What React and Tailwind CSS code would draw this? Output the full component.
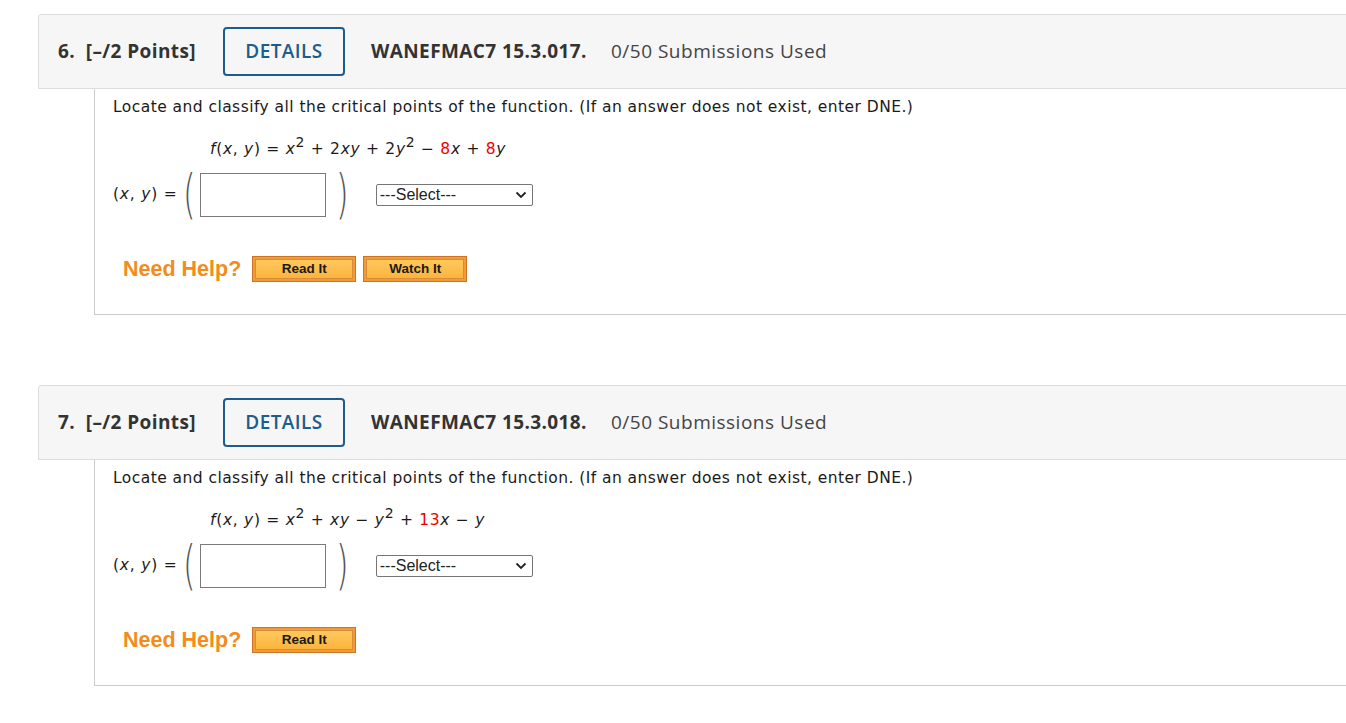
import React from 'react';

const sup = 'text-[14px] top-[-0.5em]';

const questions = [
  {
    num: '6.',
    code: 'WANEFMAC7 15.3.017.',
    fn: (
      <>
        <i>f</i>(<i>x</i>, <i>y</i>) = <i>x</i>
        <sup className={sup}>2</sup> + 2<i>xy</i> + 2<i>y</i>
        <sup className={sup}>2</sup> − <span className="text-[#ee0000]">8</span>
        <i>x</i> + <span className="text-[#ee0000]">8</span>
        <i>y</i>
      </>
    ),
    watch: true,
  },
  {
    num: '7.',
    code: 'WANEFMAC7 15.3.018.',
    fn: (
      <>
        <i>f</i>(<i>x</i>, <i>y</i>) = <i>x</i>
        <sup className={sup}>2</sup> + <i>xy</i> − <i>y</i>
        <sup className={sup}>2</sup> + <span className="text-[#ee0000]">13</span>
        <i>x</i> − <i>y</i>
      </>
    ),
    watch: false,
  },
];

function HelpButton({ label }) {
  return (
    <div className="h-[26px] border border-[#c8742a] bg-[#f49a2e] p-[2px]">
      <div
        className="h-full flex items-center justify-center border border-[#d98a3c] bg-gradient-to-b from-[#ffc95e] to-[#fbb43c] text-[13.5px] font-bold text-[#1a1a1a]"
        style={{ fontFamily: '"Liberation Sans", Arial, sans-serif' }}
      >
        {label}
      </div>
    </div>
  );
}

function Question({ q }) {
  return (
    <div className="mb-[70px]">
      {/* header */}
      <div
        className="h-[75px] w-[calc(100%+20px)] border border-[#dcdcdc] rounded-tl-[3px] bg-[#f6f6f6] flex items-center pl-[19px] text-[19px] tracking-[0.4px] text-[#333333]"
        style={{ fontFamily: '"Open Sans", sans-serif' }}
      >
        <span className="font-bold">{q.num}&nbsp; [–/2 Points]</span>
        <div className="ml-[27px] h-[49px] w-[122px] border-2 border-[#1d5c8e] rounded-[4px] flex items-center justify-center text-[#1d5c8e] font-semibold">
          DETAILS
        </div>
        <span className="ml-[26px] font-bold">{q.code}</span>
        <span className="ml-[24px] tracking-[0.5px] text-[#444444]">0/50 Submissions Used</span>
      </div>

      {/* body */}
      <div
        className="ml-[56px] h-[226px] w-[calc(100%+20px)] border-l border-b border-[#cccccc] pl-[18px] pt-[8px] text-[#1a1a1a] tracking-[0.45px]"
        style={{ fontFamily: '"DejaVu Sans", Verdana, sans-serif' }}
      >
        <p className="text-[15.5px] leading-[20px]">
          Locate and classify all the critical points of the function. (If an answer does not exist, enter DNE.)
        </p>
        <div className="mt-[21px] ml-[97px] text-[15.5px] leading-[22px] tracking-[0.7px]">{q.fn}</div>
        <div className="mt-[10px] flex items-center">
          <span className="text-[15.5px] tracking-[0.8px]">
            (<i>x</i>, <i>y</i>) =
          </span>
          <span className="ml-[5px] text-[54px] leading-[50px] font-extralight text-[#555555] scale-x-[0.6] origin-left">(</span>
          <div className="ml-[-4px] h-[44px] w-[126px] border border-[#7a7a7a] bg-white" />
          <span className="ml-[10px] text-[54px] leading-[50px] font-extralight text-[#555555] scale-x-[0.6] origin-left">)</span>
          <div
            className="ml-[18px] h-[22px] w-[157px] border border-[#767676] rounded-[2px] flex items-center justify-between pl-[3px] pr-[5px] text-[16px] tracking-normal text-[#222222]"
            style={{ fontFamily: '"Liberation Sans", Arial, sans-serif' }}
          >
            <span>---Select---</span>
            <svg width="12" height="8" viewBox="0 0 12 8" fill="none">
              <path d="M1.5 1.5 6 6l4.5-4.5" stroke="#222" strokeWidth="1.8" />
            </svg>
          </div>
        </div>
        <div className="mt-[33px] ml-[10px] flex items-center gap-[7px] tracking-normal">
          <span
            className="text-[21.5px] font-bold text-[#f28c1b] mr-[4px]"
            style={{ fontFamily: '"Liberation Sans", Arial, sans-serif' }}
          >
            Need Help?
          </span>
          <div className="w-[104px]">
            <HelpButton label="Read It" />
          </div>
          {q.watch && (
            <div className="w-[104px]">
              <HelpButton label="Watch It" />
            </div>
          )}
        </div>
      </div>
    </div>
  );
}

export default function App() {
  return (
    <div className="w-full h-[723px] overflow-hidden bg-white">
      <div className="pl-[38px] pt-[14px]">
        {questions.map((q) => (
          <Question key={q.num} q={q} />
        ))}
      </div>
    </div>
  );
}
